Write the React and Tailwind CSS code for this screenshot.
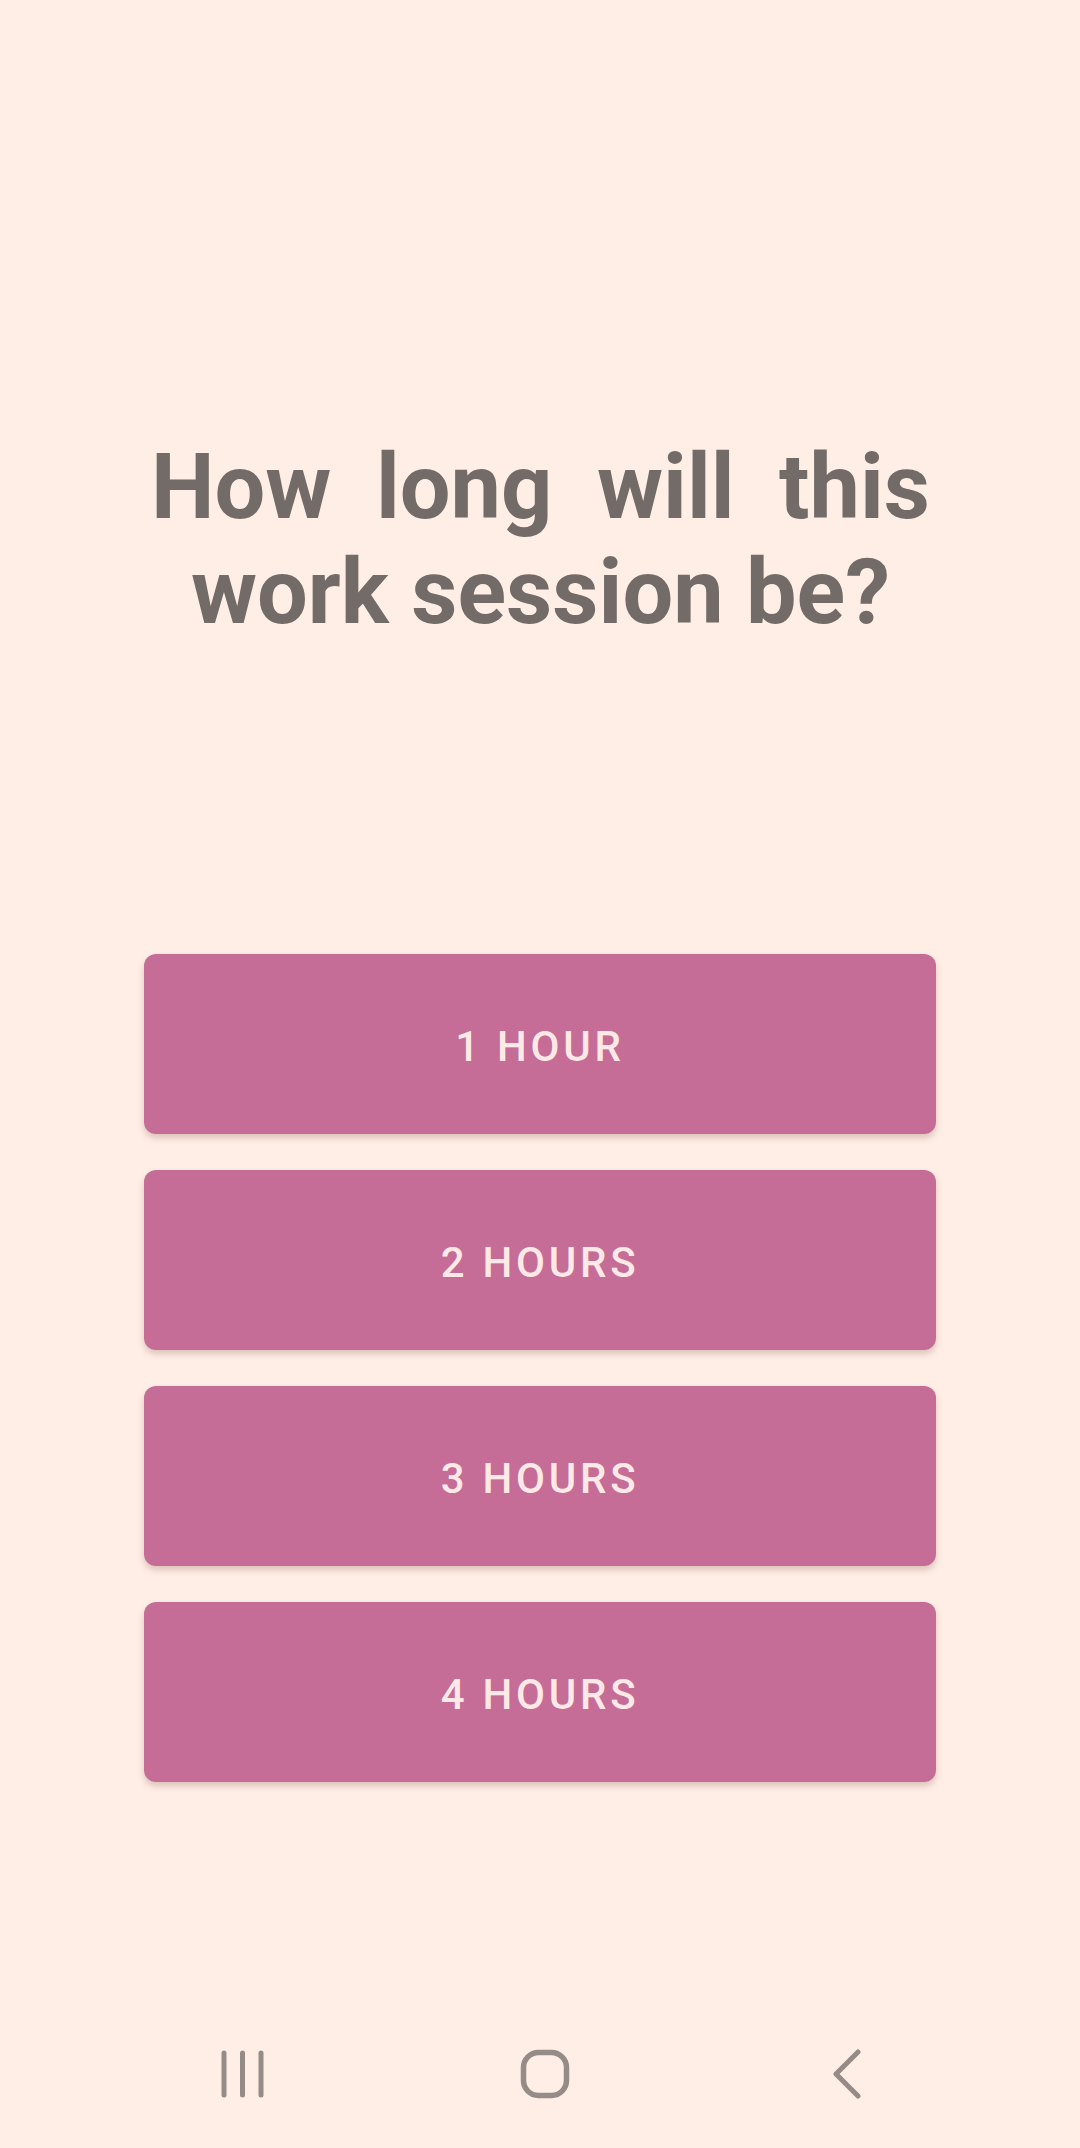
import React from 'react';

const options = ['1 Hour', '2 Hours', '3 Hours', '4 Hours'];

const NavBar = () => (
  <div className="mt-auto h-[148px] flex items-center pl-[92px]">
    <div className="w-[302px] flex justify-center">
      <svg width="44" height="48" viewBox="0 0 44 48" fill="none">
        <line x1="3" y1="3" x2="3" y2="45" stroke="#958c88" strokeWidth="5" strokeLinecap="round" />
        <line x1="21.5" y1="3" x2="21.5" y2="45" stroke="#958c88" strokeWidth="5" strokeLinecap="round" />
        <line x1="40" y1="3" x2="40" y2="45" stroke="#958c88" strokeWidth="5" strokeLinecap="round" />
      </svg>
    </div>
    <div className="w-[302px] flex justify-center">
      <svg width="50" height="50" viewBox="0 0 50 50" fill="none">
        <rect x="3.5" y="3.5" width="43" height="43" rx="15" stroke="#958c88" strokeWidth="5.5" />
      </svg>
    </div>
    <div className="w-[302px] flex justify-center">
      <svg width="34" height="50" viewBox="0 0 34 50" fill="none">
        <polyline points="28,3 6,25 28,47" stroke="#958c88" strokeWidth="5" strokeLinecap="round" strokeLinejoin="round" />
      </svg>
    </div>
  </div>
);

export default function App() {
  return (
    <div
      className="w-[1080px] h-[2148px] bg-[#ffeee6] flex flex-col"
      style={{ fontFamily: 'Roboto, "Noto Sans", sans-serif' }}
    >
      {/* titulo */}
      <h1 className="mt-[435px] ml-[151px] w-[779px] text-[90px] leading-[105px] font-bold text-[#736b67] text-justify [text-align-last:center]">
        How long will this work session be?
      </h1>

      <div className="mt-[309px] mx-[144px] flex flex-col gap-[36px]">
        {options.map(opt => (
          <button
            key={opt}
            className="h-[180px] w-full pt-[4px] rounded-[12px] bg-[#c56c97] shadow-[0_4px_6px_rgba(120,70,60,0.25)] text-[#ffe9e6] text-[42px] font-medium uppercase tracking-[3.75px]"
          >
            {opt}
          </button>
        ))}
      </div>

      <NavBar />
    </div>
  );
}
